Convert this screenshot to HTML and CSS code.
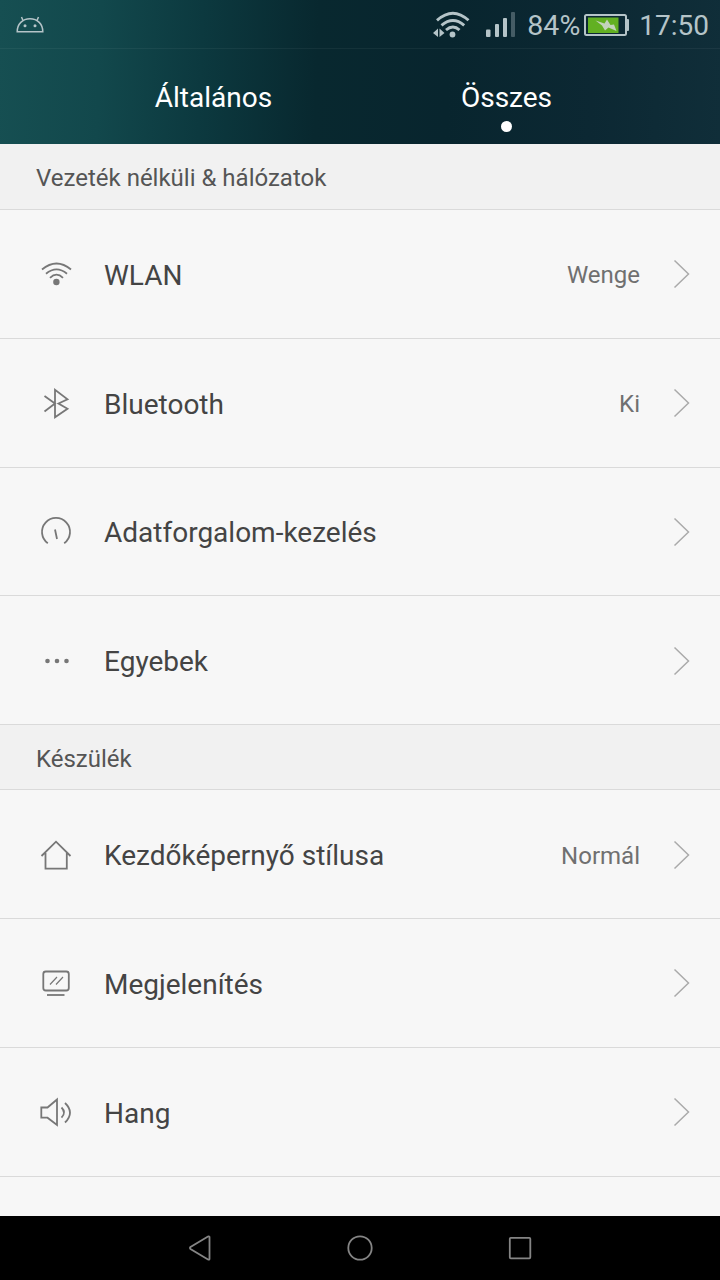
FILE: index.html
```html
<!DOCTYPE html>
<html lang="hu">
<head>
  <meta charset="UTF-8">
  <title>Beállítások</title>
  <link rel="stylesheet" href="styles.css">
</head>
<body>
  <div class="screen">
    <header class="top">
      <div class="status-bar">
        <svg class="android" width="28" height="18" viewBox="0 0 28 18" fill="none" stroke="currentColor" stroke-width="1.5">
          <path d="M1.2 15.8C1.2 8 6.5 2.8 14 2.8S26.800 8 26.800 15.8Z"/>
          <path d="M7 4.500L5.500 1M21 4.500L22.500 1"/>
          <circle cx="9" cy="9.800" r="1.500" fill="currentColor" stroke="none"/>
          <circle cx="19" cy="9.800" r="1.500" fill="currentColor" stroke="none"/>
        </svg>
        <svg class="wifi" width="38" height="28" viewBox="0 0 38 28" fill="none" stroke="currentColor" stroke-width="2.900">
          <path d="M4 9.300Q20-5 35.500 9.300"/>
          <path d="M8.500 14.300Q20 4.500 31.200 14.300"/>
          <path d="M13 19Q20 13 26.500 19"/>
          <circle cx="19.500" cy="23.500" r="2.900" fill="currentColor" stroke="none"/>
          <path d="M0 22l5-4.500v8.500zM11.500 22l-5-4.500v8.500z" fill="currentColor" stroke="none"/>
        </svg>
        <svg class="signal" width="30" height="26" viewBox="0 0 30 26" fill="currentColor">
          <rect x="0" y="17.500" width="4.500" height="7.500" rx="1"/>
          <rect x="9" y="12" width="4" height="13" rx="1"/>
          <rect x="17" y="6" width="4" height="19" rx="1"/>
          <rect x="25" y="0" width="4" height="25" rx="1" opacity=".35"/>
        </svg>
        <span class="percent">84%</span>
        <svg class="battery" width="46" height="24" viewBox="0 0 46 24">
          <rect x="1" y="2" width="41" height="20" rx="1.500" fill="none" stroke="#b5c4c8" stroke-width="2"/>
          <rect x="42.500" y="6" width="2.500" height="12" rx="1" fill="#b5c4c8"/>
          <rect x="4" y="4.500" width="30.500" height="15.500" fill="#62b022"/>
          <path d="M11.500 7.500L20.500 10.500 23 6.500 26.500 12 30 11.500 32.500 18 24.500 14.500 21 17.500 18 12.500Z" fill="#c3d3bd"/>
        </svg>
        <span class="clock">17:50</span>
      </div>
      <nav class="tabs">
        <div class="tab">Általános</div>
        <div class="tab tab-active">Összes</div>
      </nav>
    </header>

    <main class="settings">
      <h2 class="section section-first">Vezeték nélküli &amp; hálózatok</h2>
      <div class="row">
        <svg class="icon" viewBox="0 0 36 36">
          <path d="M4 13.500Q18.500 1.500 33 13.500M8 17.700Q18.500 9 29 17.700M12 21.800Q18.500 15.500 25 21.800"/>
          <circle class="dot" cx="18.400" cy="26" r="3.200"/>
        </svg>
        <span class="label">WLAN</span>
        <span class="value">Wenge</span>
        <svg class="chevron" viewBox="0 0 18 30"><path d="M1.500 1.500L15.500 15 1.500 28.500"/></svg>
      </div>
      <div class="row">
        <svg class="icon" viewBox="0 0 36 36">
          <path d="M6.500 11L17 18.500 6.500 26.500M17 4.700V32.300L29.500 23.700 20.500 18.500 29.500 14.200Z"/>
        </svg>
        <span class="label">Bluetooth</span>
        <span class="value">Ki</span>
        <svg class="chevron" viewBox="0 0 18 30"><path d="M1.500 1.500L15.500 15 1.500 28.500"/></svg>
      </div>
      <div class="row">
        <svg class="icon" viewBox="0 0 36 36">
          <path d="M9.800 29.300A14 14 0 1 1 26.200 29.300M17 15.500L19 25"/>
        </svg>
        <span class="label">Adatforgalom-kezelés</span>
        <svg class="chevron" viewBox="0 0 18 30"><path d="M1.500 1.500L15.500 15 1.500 28.500"/></svg>
      </div>
      <div class="row">
        <svg class="icon" viewBox="0 0 36 36">
          <g class="dot"><circle cx="9.500" cy="18" r="2.300"/><circle cx="19" cy="18" r="2.300"/><circle cx="28.500" cy="18" r="2.300"/></g>
        </svg>
        <span class="label">Egyebek</span>
        <svg class="chevron" viewBox="0 0 18 30"><path d="M1.500 1.500L15.500 15 1.500 28.500"/></svg>
      </div>

      <h2 class="section">Készülék</h2>
      <div class="row">
        <svg class="icon" viewBox="0 0 36 36">
          <path d="M3.500 19L18 4.700 32.500 19M7.500 16V31.700H28.800V16"/>
        </svg>
        <span class="label">Kezdőképernyő stílusa</span>
        <span class="value">Normál</span>
        <svg class="chevron" viewBox="0 0 18 30"><path d="M1.500 1.500L15.500 15 1.500 28.500"/></svg>
      </div>
      <div class="row">
        <svg class="icon" viewBox="0 0 36 36">
          <rect x="5.300" y="6.500" width="25.500" height="19" rx="2.500"/>
          <path d="M9 30H26.500"/>
          <path class="thin" d="M12 19.500L19 12M18 19.500L25 12"/>
        </svg>
        <span class="label">Megjelenítés</span>
        <svg class="chevron" viewBox="0 0 18 30"><path d="M1.500 1.500L15.500 15 1.500 28.500"/></svg>
      </div>
      <div class="row">
        <svg class="icon" viewBox="0 0 36 36">
          <path d="M3.300 13.500H9.500L19 5.500V31L9.500 23.700H3.300ZM23.500 13.500Q28.500 18.500 23.500 23.700M27 9Q37 18.500 27 28.500"/>
        </svg>
        <span class="label">Hang</span>
        <svg class="chevron" viewBox="0 0 18 30"><path d="M1.500 1.500L15.500 15 1.500 28.500"/></svg>
      </div>
    </main>

    <footer class="navbar">
      <svg width="26" height="26" viewBox="0 0 26 26"><path d="M22.500 2V24Q22 25 21 24.500L3.500 14Q2.500 13 3.500 12L21 1.500Q22 1 22.500 2Z"/></svg>
      <svg width="26" height="26" viewBox="0 0 26 26"><circle cx="13" cy="13" r="11.700"/></svg>
      <svg width="26" height="26" viewBox="0 0 26 26"><rect x="2.800" y="2.800" width="20.500" height="20.500" rx="1"/></svg>
    </footer>
  </div>
</body>
</html>
```
FILE: styles.css
```css
* {
  box-sizing: border-box;
}
body {
  margin: 0;
  font-family: Roboto, "Noto Sans", sans-serif;
  background: #f7f7f7;
}
.screen {
  display: flex;
  flex-direction: column;
  width: 720px;
  height: 1280px;
  overflow: hidden;
}
.top {
  flex: none;
  height: 144px;
  background: linear-gradient(92deg, #164f52 0%, #12484c 14%, #0c393f 28%, #08282f 44%, #08252e 62%, #0c2833 82%, #102e39 100%);
}
.status-bar {
  display: flex;
  align-items: center;
  height: 49px;
  padding: 0 12px 0 16px;
  border-bottom: 1px solid rgba(255, 255, 255, 0.05);
  color: #b5c4c8;
  font-size: 28.5px;
}
.android {
  margin-top: 2px;
}
.wifi {
  margin-left: auto;
  margin-top: 1px;
}
.signal {
  margin-left: 15px;
  margin-top: 2px;
}
.percent,
.clock {
  padding-top: 3px;
}
.percent {
  margin-left: 11px;
}
.battery {
  margin-left: 4px;
  margin-top: 1px;
}
.clock {
  margin-left: 9px;
  margin-right: -1px;
  font-size: 28px;
}
.tabs {
  display: flex;
  height: 95px;
  padding: 0 67px;
}
.tab {
  display: flex;
  flex-direction: column;
  align-items: center;
  flex: 1;
  padding-top: 30px;
  color: #fff;
  font-size: 28px;
  line-height: 38px;
}
.tab-active::after {
  content: "";
  width: 11px;
  height: 11px;
  margin-top: 4px;
  border-radius: 50%;
  background: #fff;
}
.settings {
  flex: 1;
  min-height: 0;
}
.section {
  height: 65px;
  margin: 0;
  padding: 2px 36px 0;
  background: #f1f1f1;
  border-bottom: 1px solid #dadada;
  color: #555;
  font-size: 24px;
  font-weight: 400;
  line-height: 64px;
}
.section-first {
  height: 66px;
}
.row {
  display: flex;
  align-items: center;
  height: 128.8px;
  padding: 3px 29px 0 38px;
  border-bottom: 1px solid #dadada;
  color: #444;
}
.icon {
  width: 36px;
  height: 36px;
  margin-top: -2px;
  fill: none;
  stroke: #777;
  stroke-width: 1.800;
}
.icon .dot {
  fill: #777;
  stroke: none;
}
.icon .thin {
  stroke-width: 1.200;
}
.label {
  flex: 1;
  margin-left: 30px;
  font-size: 28px;
}
.value {
  color: #707070;
  font-size: 24px;
}
.chevron {
  width: 18px;
  height: 30px;
  margin: -2px 0 0 33px;
  fill: none;
  stroke: #aaa;
  stroke-width: 1.500;
}
.navbar {
  display: flex;
  flex: none;
  align-items: center;
  justify-content: center;
  gap: 134px;
  height: 64px;
  background: #000;
}
.navbar svg {
  fill: none;
  stroke: #858585;
  stroke-width: 1.800;
}
```
